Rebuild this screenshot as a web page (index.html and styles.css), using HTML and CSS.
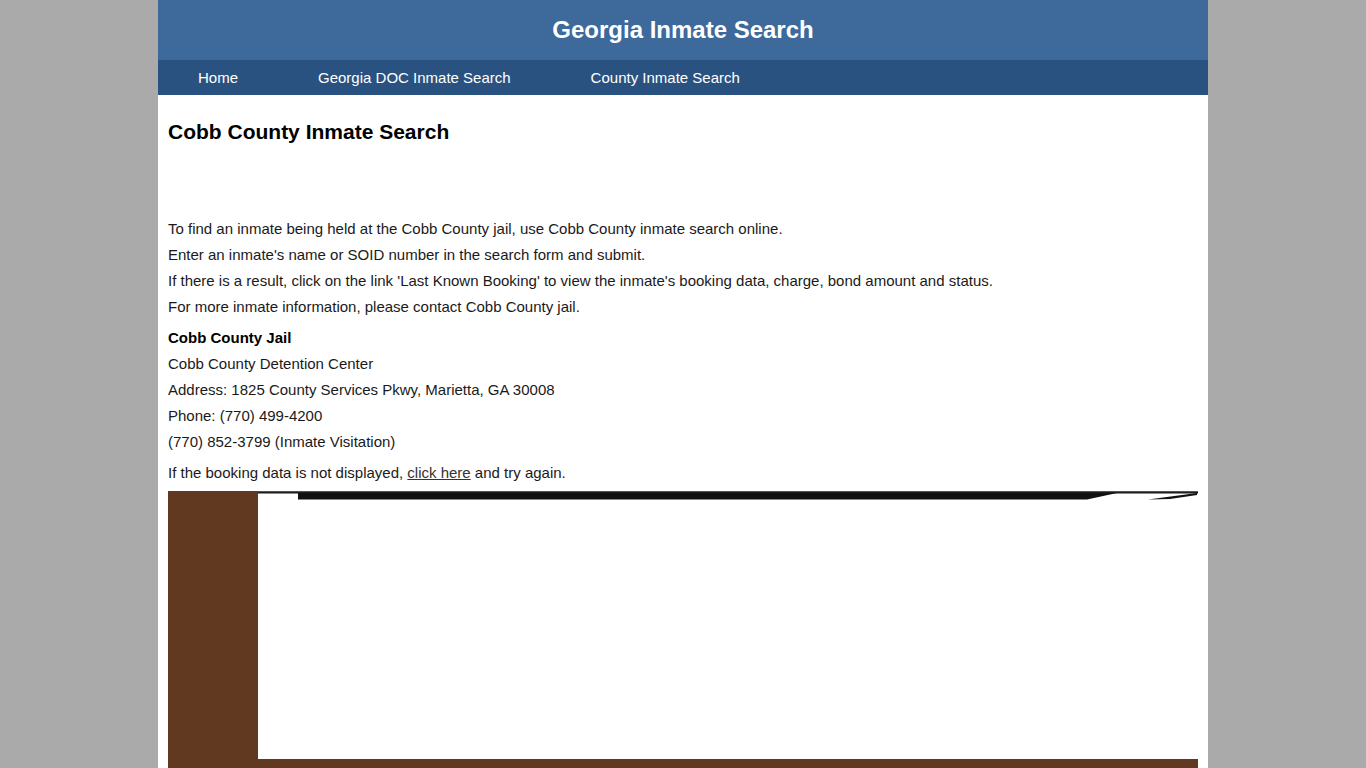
FILE: index.html
```html
<!DOCTYPE html>
<html lang="en">
<head>
<meta charset="utf-8">
<title>Cobb County Inmate Search</title>
<link rel="stylesheet" href="styles.css">
</head>
<body>
<div class="page">
  <header class="site-header">
    <div class="site-title">Georgia Inmate Search</div>
  </header>
  <nav class="site-nav">
    <a href="#">Home</a>
    <a href="#">Georgia DOC Inmate Search</a>
    <a href="#">County Inmate Search</a>
  </nav>
  <main class="content">
    <h1 class="page-title">Cobb County Inmate Search</h1>
    <p>To find an inmate being held at the Cobb County jail, use Cobb County inmate search online.<br>
    Enter an inmate's name or SOID number in the search form and submit.<br>
    If there is a result, click on the link 'Last Known Booking' to view the inmate's booking data, charge, bond amount and status.<br>
    For more inmate information, please contact Cobb County jail.</p>
    <p><strong>Cobb County Jail</strong><br>
    Cobb County Detention Center<br>
    Address: 1825 County Services Pkwy, Marietta, GA 30008<br>
    Phone: (770) 499-4200<br>
    (770) 852-3799 (Inmate Visitation)</p>
    <p>If the booking data is not displayed, <a class="text-link" href="#">click here</a> and try again.</p>
    <div class="frame">
      <div class="frame-inner">
        <svg class="frame-bar" width="940" height="10" viewBox="0 0 940 10">
          <rect x="0" y="0" width="940" height="1" fill="#555"/>
          <rect x="0" y="1" width="940" height="1.5" fill="#1c1c1c"/>
          <polygon points="40,2 859,2 829,8.5 40,8.5" fill="#111"/>
          <polygon points="890,8.5 939,2 939,4 912,8" fill="#111"/>
        </svg>
      </div>
    </div>
  </main>
</div>
</body>
</html>
```
FILE: styles.css
```css
html, body {
  margin: 0;
  padding: 0;
}
body {
  background: #aaaaaa;
  font-family: "Liberation Sans", Arial, sans-serif;
  color: #1a1a1a;
}
.page {
  width: 1050px;
  margin: 0 auto;
  background: #ffffff;
  min-height: 768px;
}
.site-header {
  height: 60px;
  background: #3d6a9b;
  display: flex;
  align-items: center;
  justify-content: center;
}
.site-title {
  color: #ffffff;
  font-size: 24px;
  font-weight: bold;
  line-height: 60px;
}
.site-nav {
  height: 35px;
  background: #2a5280;
  display: flex;
  align-items: center;
}
.site-nav a {
  color: #ffffff;
  text-decoration: none;
  font-size: 15px;
  padding: 0 40px;
  line-height: 35px;
}
.content {
  padding: 0 10px;
}
.page-title {
  font-size: 21px;
  line-height: 24px;
  margin: 25px 0 72px;
  color: #000;
}
.content p {
  font-size: 15px;
  line-height: 26px;
  margin: 0 0 5px;
}
.content strong {
  color: #000;
}
.text-link {
  color: #333;
  text-decoration: underline;
}
.frame {
  background: #613920;
  padding-left: 90px;
  padding-bottom: 40px;
  margin-top: 5px;
}
.frame-inner {
  background: #ffffff;
  height: 268px;
}
.frame-bar {
  display: block;
}
```
